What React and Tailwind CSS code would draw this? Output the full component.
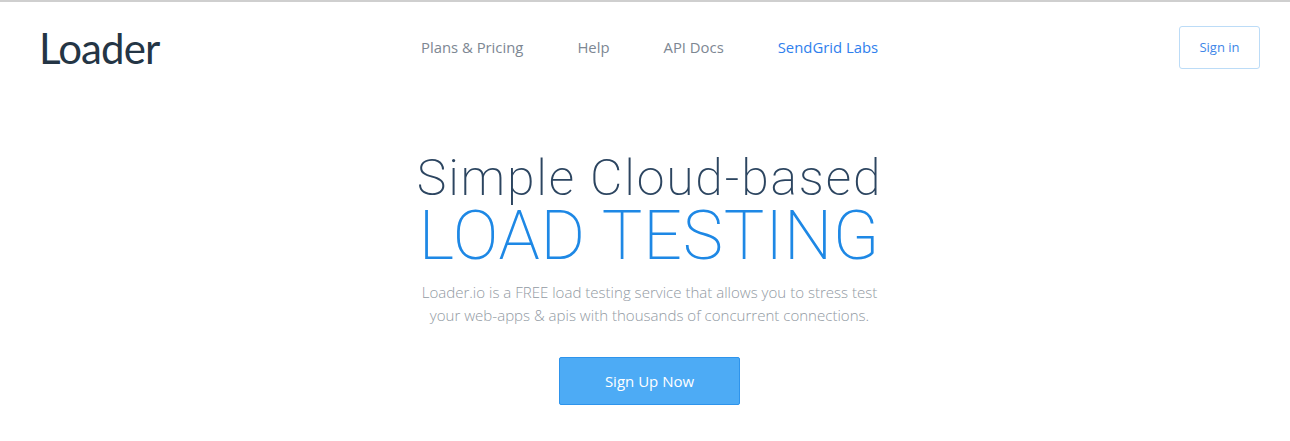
import React from "react";

const navLinks = [
  { label: "Plans & Pricing", color: "text-[#7d8793]" },
  { label: "Help", color: "text-[#7d8793]" },
  { label: "API Docs", color: "text-[#7d8793]" },
  { label: "SendGrid Labs", color: "text-[#2f80ed]" },
];

export default function App() {
  return (
    <div className="h-[441px] overflow-hidden bg-white border-t-2 border-[#cfcfcf] font-['Open_Sans',sans-serif]">
      {/* Header */}
      <header className="flex items-start pl-[39px] pr-[30px] pt-[24px]">
        <a className="w-[122px] text-[42px] leading-[44px] tracking-[-0.9px] text-[#243545] font-['Lato',sans-serif] font-normal">
          Loader
        </a>
        <nav className="ml-[260px] mt-[1px] flex items-center gap-[54px] h-[40px]">
          {navLinks.map((l) => (
            <a key={l.label} className={`text-[14.85px] leading-[20px] ${l.color}`}>
              {l.label}
            </a>
          ))}
        </nav>
        <button className="ml-auto w-[81px] h-[43px] rounded-[3px] border border-[#bcdcf7] text-[13px] text-[#3d86e8]">
          Sign in
        </button>
      </header>

      {/* Hero */}
      <section className="flex flex-col items-center pl-[9px] pt-[80px]">
        <h1 className="text-[50px] leading-[56px] font-extralight tracking-[1.8px] text-[#2c4560] font-['Roboto',sans-serif]">
          Simple Cloud-based
        </h1>
        <h2 className="text-[68px] leading-[60px] font-extralight tracking-[0.8px] text-[#1e88e5] font-['Roboto',sans-serif]">
          LOAD TESTING
        </h2>
        <p className="mt-[15px] text-center text-[15.05px] leading-[23px] font-light text-[#929aa3]">
          Loader.io is a FREE load testing service that allows you to stress test
          <br />
          your web-apps &amp; apis with thousands of concurrent connections.
        </p>
        <button className="mt-[30px] w-[181px] h-[48px] rounded-[2px] border border-[#2e94ec] bg-[#4dabf5] text-[15px] font-medium text-white">
          Sign Up Now
        </button>
      </section>
    </div>
  );
}
